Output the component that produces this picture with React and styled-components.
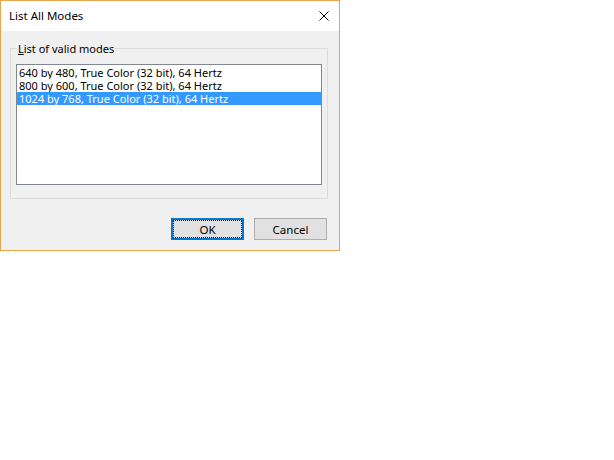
import React from 'react';
import styled, { createGlobalStyle } from 'styled-components';

const modes = [
  '640 by 480, True Color (32 bit), 64 Hertz',
  '800 by 600, True Color (32 bit), 64 Hertz',
  '1024 by 768, True Color (32 bit), 64 Hertz',
];

const GlobalStyle = createGlobalStyle`
  html, body {
    margin: 0;
    padding: 0;
    background: #ffffff;
  }
  body {
    font-family: "Noto Sans", "Liberation Sans", sans-serif;
    font-size: 11px;
    color: #000000;
  }
`;

const Window = styled.div`
  width: 338px;
  height: 249px;
  border: 1px solid #e8a64c;
  display: flex;
  flex-direction: column;
  background: #f0f0f0;
`;

const TitleBar = styled.div`
  height: 30px;
  background: #ffffff;
  display: flex;
  align-items: center;
  justify-content: space-between;
  padding: 0 10px 0 8px;
`;

const Title = styled.span`
  font-size: 11.5px;
  padding-bottom: 1px;
`;

const CloseButton = styled.div`
  width: 10px;
  height: 10px;
  display: flex;
`;

const Body = styled.div`
  flex: 1;
  display: flex;
  flex-direction: column;
  padding: 10px 11px 0 9px;
`;

const Group = styled.fieldset`
  margin: 0;
  padding: 8px 5px 13px 5px;
  border: 1px solid #dcdcdc;
  min-width: 0;
`;

const Legend = styled.legend`
  padding: 0 1px;
  margin-left: 1px;
  font-size: 11px;
  line-height: 15px;
`;

const Accel = styled.span`
  text-decoration: underline;
`;

const ListBox = styled.div`
  height: 118px;
  padding-top: 1px;
  border: 1px solid #828790;
  background: #ffffff;
  display: flex;
  flex-direction: column;
`;

const Row = styled.div`
  height: 13px;
  line-height: 13px;
  font-size: 11px;
  padding-left: 2px;
  white-space: nowrap;
  overflow: hidden;
  background: ${(p) => (p.selected ? '#3399ff' : 'transparent')};
  color: ${(p) => (p.selected ? '#ffffff' : '#000000')};
`;

const Buttons = styled.div`
  display: flex;
  justify-content: flex-end;
  gap: 10px;
  margin-top: 19px;
  padding-right: 1px;
`;

const Button = styled.button`
  width: 73px;
  height: 22px;
  box-sizing: border-box;
  font-family: inherit;
  font-size: 11.5px;
  color: #000000;
  background: #e1e1e1;
  border: ${(p) => (p.primary ? '2px solid #0078d7' : '1px solid #adadad')};
  outline: ${(p) => (p.primary ? '1px dotted #000000' : 'none')};
  outline-offset: -3px;
  padding: 0;
`;

export default function App() {
  return (
    <>
      <GlobalStyle />
      <Window>
        <TitleBar>
          <Title>List All Modes</Title>
          <CloseButton>
            <svg width="10" height="10" viewBox="0 0 10 10">
              <path d="M0.5 0.5 L9.5 9.5 M9.5 0.5 L0.5 9.5" stroke="#000" strokeWidth="1" />
            </svg>
          </CloseButton>
        </TitleBar>
        <Body>
          <Group>
            <Legend>
              <Accel>L</Accel>ist of valid modes
            </Legend>
            <ListBox>
              {modes.map((m, i) => (
                <Row key={m} selected={i === 2}>
                  {m}
                </Row>
              ))}
            </ListBox>
          </Group>
          <Buttons>
            <Button primary>OK</Button>
            <Button>Cancel</Button>
          </Buttons>
        </Body>
      </Window>
    </>
  );
}
